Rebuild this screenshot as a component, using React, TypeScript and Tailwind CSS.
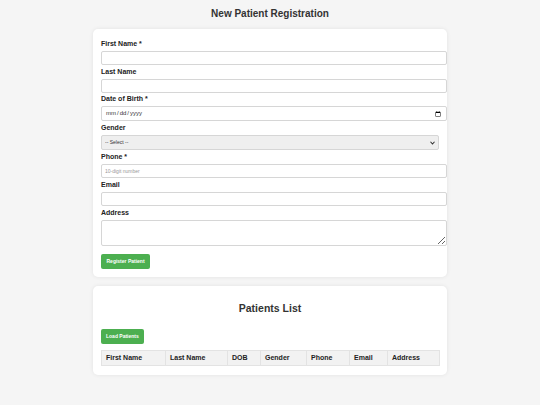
import { FC } from 'react';

type FieldProps = {
	label: string,
	children: React.ReactNode
}

const Field: FC<FieldProps> = ({ label, children }) => (
	<div className="flex flex-col">
		<label className="block text-[7px] leading-[8px] font-bold text-[#222] mb-[3px]">{label}</label>
		{children}
	</div>
);

const inputCls = "box-content w-full h-[12px] px-[3px] mb-[3px] border border-[#d6d6d6] rounded-[2px] bg-white text-[5px] text-[#333] placeholder:text-[#999] outline-none";

const columns = [
	{ name: 'First Name', w: 'w-[64px]' },
	{ name: 'Last Name', w: 'w-[62px]' },
	{ name: 'DOB', w: 'w-[33px]' },
	{ name: 'Gender', w: 'w-[46px]' },
	{ name: 'Phone', w: 'w-[43px]' },
	{ name: 'Email', w: 'w-[38px]' },
	{ name: 'Address', w: 'w-[52px]' },
];

const App: FC = () => {
	return (
		<div className="min-h-screen bg-[#f5f5f5] font-['Liberation_Sans',Arial,sans-serif] text-[#333] pt-[8px] pb-[30px]">
			<h1 className="text-center text-[10px] leading-[12px] font-bold text-[#333]">New Patient Registration</h1>

			<form className="w-[354px] mx-auto mt-[9px] bg-white rounded-[5px] shadow-[0_0_4px_rgba(0,0,0,0.08)] pt-[11px] pb-[7px] px-[8px]">
				<Field label="First Name *">
					<input type="text" className={inputCls} />
				</Field>
				<Field label="Last Name">
					<input type="text" className="box-content w-full h-[12px] px-[3px] mb-[2px] border border-[#d6d6d6] rounded-[2px] bg-white text-[5px] outline-none" />
				</Field>
				<Field label="Date of Birth *">
					<input type="date" className="box-content w-full h-[13px] px-[3px] mb-[3px] border border-[#d6d6d6] rounded-[2px] bg-white text-[6px] text-[#333]" />
				</Field>
				<Field label="Gender">
					<div className="relative mb-[3px]">
						<select className="block w-full h-[15px] px-[3px] appearance-none border border-[#d6d6d6] rounded-[2px] bg-[#efefef] text-[5px] text-[#333]">
							<option>-- Select --</option>
							<option>Male</option>
							<option>Female</option>
							<option>Other</option>
						</select>
						<svg className="absolute right-[4px] top-[5.5px] w-[5px] h-[4px] pointer-events-none" viewBox="0 0 10 8">
							<path d="M1 1.5 L5 6 L9 1.5" fill="none" stroke="#333" strokeWidth="2.2" />
						</svg>
					</div>
				</Field>
				<Field label="Phone *">
					<input type="tel" placeholder="10-digit number" className={inputCls} />
				</Field>
				<Field label="Email">
					<input type="email" className={inputCls} />
				</Field>
				<Field label="Address">
					<textarea className="box-content block w-full h-[24px] px-[3px] border border-[#d6d6d6] rounded-[2px] bg-white text-[5px] resize-y" />
				</Field>
				<button type="button" className="mt-[8px] h-[15px] px-[5.5px] rounded-[2px] bg-[#4caf50] text-white text-[5px] font-bold">
					Register Patient
				</button>
			</form>

			<section className="w-[354px] mx-auto mt-[9px] bg-white rounded-[5px] shadow-[0_0_4px_rgba(0,0,0,0.08)] pt-[16px] pb-[9px] px-[8px]">
				<h2 className="text-center text-[10.5px] leading-[12px] font-bold text-[#333]">Patients List</h2>
				<button type="button" className="mt-[15px] h-[15px] px-[5px] rounded-[2px] bg-[#4caf50] text-white text-[5px] font-bold">
					Load Patients
				</button>
				<table className="mt-[5px] w-full table-fixed border-collapse">
					<thead>
						<tr className="bg-[#f2f2f2]">
							{columns.map((c) => (
								<th key={c.name} className={`${c.w} h-[15px] px-[4px] text-left text-[7px] font-bold text-[#222] border border-[#e3e3e3]`}>
									{c.name}
								</th>
							))}
						</tr>
					</thead>
					<tbody></tbody>
				</table>
			</section>
		</div>
	);
};

export default App;
